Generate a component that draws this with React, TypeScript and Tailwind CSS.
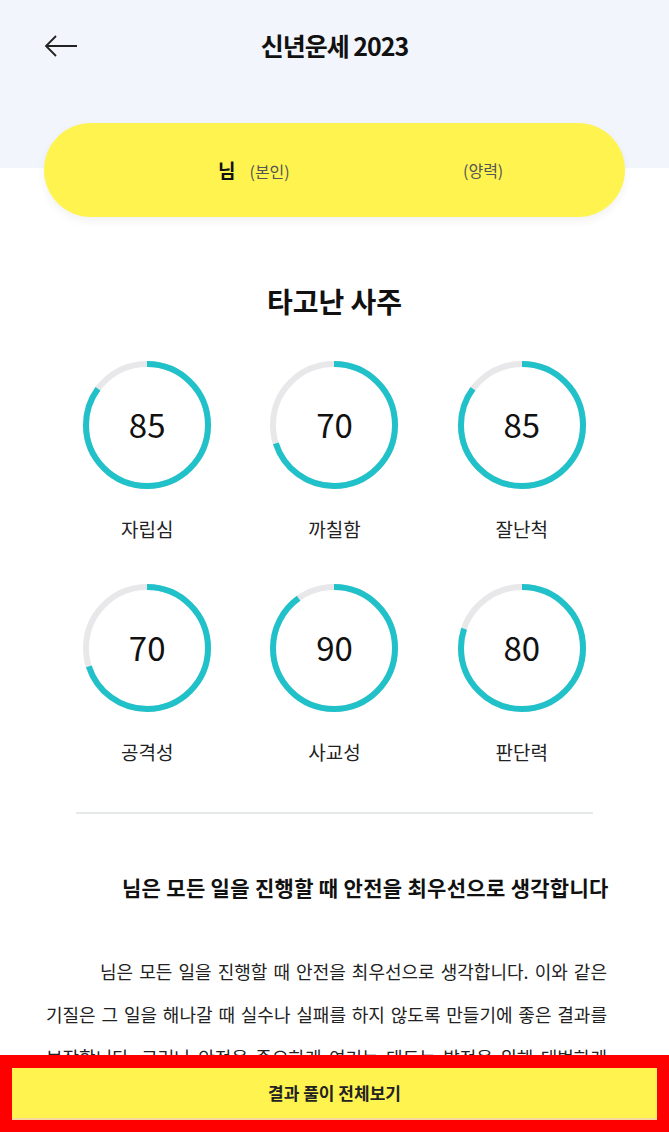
const scores = [
  { value: 85, label: '자립심' },
  { value: 70, label: '까칠함' },
  { value: 85, label: '잘난척' },
  { value: 70, label: '공격성' },
  { value: 90, label: '사교성' },
  { value: 80, label: '판단력' },
]

const lines = [
  '님은 모든 일을 진행할 때 안전을 최우선으로 생각합니다. 이와 같은',
  '기질은 그 일을 해나갈 때 실수나 실패를 하지 않도록 만들기에 좋은 결과를',
  '보장합니다. 그러나 안전을 중요하게 여기는 태도는 발전을 위해 대범하게',
  '도전해야 하는 순간에는 망설임이 되기도 합니다.',
]

function ScoreRing({ value, label }: { value: number; label: string }) {
  const r = 61
  const c = 2 * Math.PI * r
  return (
    <div className="flex flex-col items-center">
      <div className="relative w-[128px] h-[128px]">
        <svg width="128" height="128" viewBox="0 0 128 128" className="-rotate-90">
          <circle cx="64" cy="64" r={r} fill="none" stroke="#e8e8ea" strokeWidth="6" />
          <circle
            cx="64"
            cy="64"
            r={r}
            fill="none"
            stroke="#21c1ca"
            strokeWidth="6"
            strokeDasharray={`${(c * value) / 100} ${c}`}
          />
        </svg>
        <div className="absolute inset-0 flex items-center justify-center text-[33px] text-[#111]">
          {value}
        </div>
      </div>
      <div className="mt-[27px] text-[19px] leading-[26px] text-[#222]">{label}</div>
    </div>
  )
}

export default function App() {
  return (
    <div
      className="relative w-[669px] h-[1132px] overflow-hidden bg-white"
      style={{ fontFamily: '"Noto Sans CJK KR", "Noto Sans", sans-serif' }}
    >
      <header className="bg-[#f3f5fc] h-[168px] px-[44px]">
        <div className="flex items-center h-[92px]">
          <svg width="34" height="24" viewBox="0 0 34 24" fill="none" stroke="#222" strokeWidth="1.8">
            <path d="M33 12H2M12 2L2 12l10 10" />
          </svg>
          <h1 className="flex-1 text-center pr-[34px] text-[25px] font-bold tracking-[-1px] text-[#111]">
            신년운세 2023
          </h1>
        </div>
      </header>

      <div className="mx-[44px] -mt-[45px] h-[94px] rounded-full bg-[#fff44f] shadow-[0_4px_10px_rgba(0,0,0,0.06)] flex items-center text-[16px]">
        <div className="w-[294px] pl-[174px] flex items-baseline gap-[14px]">
          <span className="font-bold text-[19px] text-[#111]">님</span>
          <span className="text-[#555]">(본인)</span>
        </div>
        <div className="pl-[125px] text-[#555]">(양력)</div>
      </div>

      <h2 className="mt-[64px] text-center text-[28px] font-bold text-[#111] leading-[40px]">타고난 사주</h2>

      <div className="w-[562px] mx-auto mt-[40px] grid grid-cols-3 gap-y-[42px]">
        {scores.map((s) => (
          <ScoreRing key={s.label} value={s.value} label={s.label} />
        ))}
      </div>

      <div className="mx-[76px] mt-[47px] h-[2px] bg-[#e6e9ea]" />

      <h3 className="mt-[58px] pl-[122px] text-[21px] font-bold tracking-[0.3px] text-[#111] leading-[30px] whitespace-nowrap">
        님은 모든 일을 진행할 때 안전을 최우선으로 생각합니다
      </h3>

      <div className="mt-[48px] pl-[46px] pr-[62px] text-[18px] leading-[43px] text-[#222]">
        {lines.map((line, i) => (
          <p
            key={i}
            className={`whitespace-nowrap ${i < lines.length - 1 ? 'text-justify [text-align-last:justify]' : ''} ${i === 0 ? 'pl-[54px]' : ''}`}
          >
            {line}
          </p>
        ))}
      </div>

      <div className="absolute left-0 right-0 bottom-0 h-[77px] bg-[#ff0000] px-[12px] pt-[13px] pb-[12px]">
        <button className="w-full h-full bg-[#fff44f] border-b-2 border-[#f7d9a0] text-[17px] font-bold text-[#222]">
          결과 풀이 전체보기
        </button>
      </div>
    </div>
  )
}
